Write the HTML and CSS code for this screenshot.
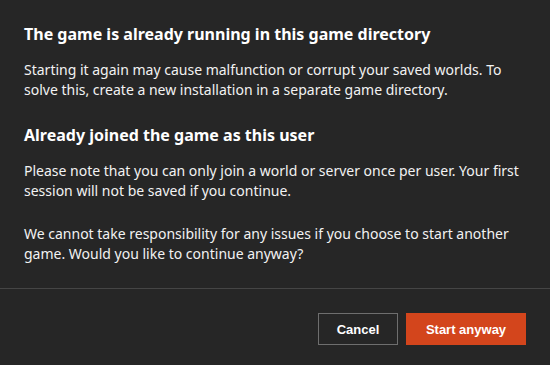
FILE: index.html
```html
<!DOCTYPE html>
<html>
<head>
    <title>Game already running</title>
    <link rel="stylesheet" href="styles.css">
</head>
<body>
    <div class="dialog">
        <div class="dialog-body">
            <h2 class="title">The game is already running in this game directory</h2>
            <p class="text">Starting it again may cause malfunction or corrupt your saved worlds. To solve this, create a new installation in a separate game directory.</p>

            <h2 class="title">Already joined the game as this user</h2>
            <p class="text">Please note that you can only join a world or server once per user. Your first session will not be saved if you continue.</p>
            <p class="text">We cannot take responsibility for any issues if you choose to start another game. Would you like to continue anyway?</p>
        </div>
        <div class="dialog-footer">
            <button class="btn btn-cancel">Cancel</button>
            <button class="btn btn-start">Start anyway</button>
        </div>
    </div>
</body>
</html>
```

FILE: styles.css
```css
html, body {
    margin: 0;
    height: 100%;
}

body {
    background-color: #262626;
    color: #ffffff;
    font-family: "Noto Sans", "Open Sans", sans-serif;
}

.dialog {
    display: flex;
    flex-direction: column;
    height: 100%;
}

.dialog-body {
    padding: 22px 24px 24px 24px;
    border-bottom: 1px solid #454545;
}

.title {
    margin: 0 0 14px 0;
    font-size: 16px;
    line-height: 24px;
    font-weight: 700;
}

.text {
    margin: 0 0 23px 0;
    font-size: 14px;
    line-height: 20px;
    color: #f2f2f2;
}

.text:last-child {
    margin-bottom: 0;
}

.dialog-footer {
    display: flex;
    justify-content: flex-end;
    gap: 8px;
    padding: 24px 24px 20px 24px;
}

.btn {
    height: 32px;
    border: none;
    font-family: "Liberation Sans", Arial, sans-serif;
    font-size: 13px;
    font-weight: 700;
    color: #ffffff;
    cursor: pointer;
}

.btn-cancel {
    width: 80px;
    background-color: transparent;
    border: 1px solid #6e6e6e;
}

.btn-start {
    width: 120px;
    background-color: #d3451c;
}
```
